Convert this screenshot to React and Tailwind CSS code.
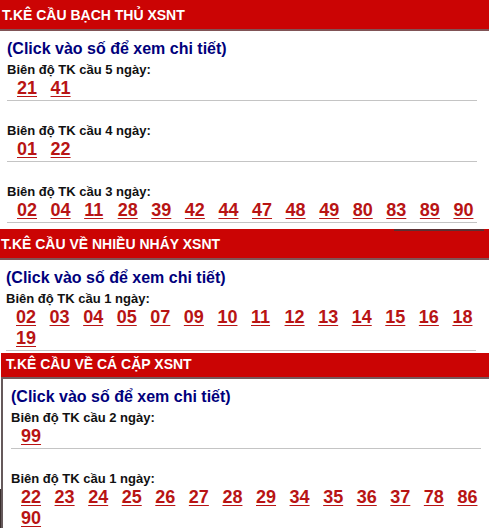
const sections = [
  {
    title: 'T.KÊ CẦU BẠCH THỦ XSNT',
    bar: 'h-[31px] border-[#805456] pt-[2px] pl-[2px]',
    frame: '',
    body: 'pr-[12px] pb-[6px] pl-[7px]',
    groups: [
      { days: 5, numbers: ['21', '41'] },
      { days: 4, numbers: ['01', '22'] },
      {
        days: 3,
        numbers: ['02', '04', '11', '28', '39', '42', '44', '47', '48', '49', '80', '83', '89', '90'],
      },
    ],
  },
  {
    title: 'T.KÊ CẦU VỀ NHIỀU NHÁY XSNT',
    bar: 'h-[31px] border-[#805456] pt-[2px] pl-[1px]',
    edge: true,
    frame: '',
    body: 'pr-[13px] pb-[2px] pl-[6px]',
    groups: [
      {
        days: 1,
        numbers: ['02', '03', '04', '05', '07', '09', '10', '11', '12', '13', '14', '15', '16', '18', '19'],
      },
    ],
  },
  {
    title: 'T.KÊ CẦU VỀ CÁ CẶP XSNT',
    bar: 'h-[26px] border-[#75595c] pb-[2px] pl-[5px]',
    frame: 'ml-px',
    body: 'border-l-2 border-[#65595b] pr-[8px] pl-[8px]',
    groups: [
      { days: 2, numbers: ['99'] },
      {
        days: 1,
        numbers: ['22', '23', '24', '25', '26', '27', '28', '29', '34', '35', '36', '37', '78', '86', '90'],
      },
    ],
  },
];

function Group({ days, numbers }) {
  return (
    <div className="border-b border-[#c4c4c4] pb-px last:in-[section:last-child]:border-b-0 last:in-[section:last-child]:pb-0">
      <h3 className="h-[19px] text-[13px] leading-[21px] text-[#111]">Biên độ TK cầu {days} ngày:</h3>
      <ul className="-mr-[10px] ml-[10px] grid grid-cols-[repeat(14,minmax(0,1fr))] text-[18px] leading-[21px] text-[#b81414]">
        {numbers.map((number) => (
          <li key={number}>
            <a href={`#${number}`} className="underline decoration-1 underline-offset-2">
              {number}
            </a>
          </li>
        ))}
      </ul>
    </div>
  );
}

function Section({ title, bar, edge, frame, body, groups }) {
  return (
    <section className={frame}>
      <h2 className={`relative flex items-center border-b-2 bg-[#cb0404] text-[14px] text-white ${bar}`}>
        {title}
        {edge && <span className="absolute top-0 right-[5px] h-[2px] w-[90px] bg-[#5c3033]" />}
      </h2>
      <div className={`pt-[7px] ${body}`}>
        <p className="text-[16px] leading-[21px] text-[#00007c]">(Click vào số để xem chi tiết)</p>
        <div className="flex flex-col gap-[19px]">
          {groups.map((group) => (
            <Group key={group.days} {...group} />
          ))}
        </div>
      </div>
    </section>
  );
}

export default function App() {
  return (
    <main className="relative bg-white font-['Liberation_Sans',Arial,sans-serif] font-bold">
      <span className="absolute bottom-0 left-0 h-10 w-px bg-[#3a2e2e]" />
      {sections.map((section) => (
        <Section key={section.title} {...section} />
      ))}
    </main>
  );
}
